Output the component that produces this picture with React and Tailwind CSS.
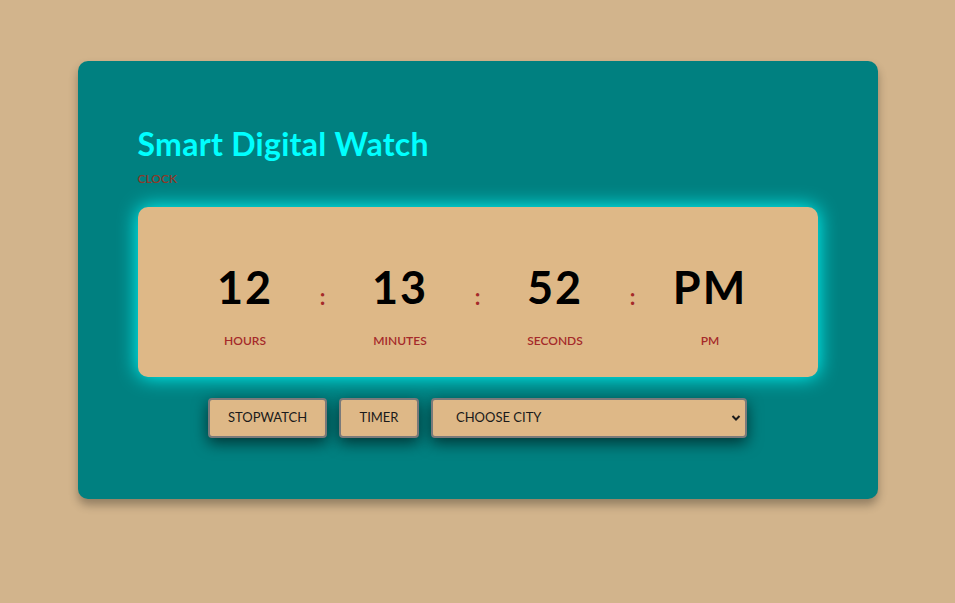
import { useState } from "react";

const font = { fontFamily: '"Lato", "DejaVu Sans", sans-serif' };

function Unit({ value, label }) {
  return (
    <div className="flex w-[110px] flex-col items-center">
      <span className="text-[45px] font-bold leading-[56px] tracking-[2px] text-black">{value}</span>
      <span className="mt-[18px] text-[12px] font-semibold leading-[16px] text-[#a52a2a]">{label}</span>
    </div>
  );
}

function Colon() {
  return (
    <div className="flex w-[45px] justify-center pt-[24px]">
      <span className="text-[22px] font-bold leading-[28px] text-[#a52a2a]">:</span>
    </div>
  );
}

export default function App() {
  const [time] = useState({ h: "12", m: "13", s: "52", ampm: "PM" });

  return (
    <div className="min-h-[603px] w-full bg-[#d2b48c] pt-[61px]" style={font}>
      <div className="mx-auto w-[800px] rounded-[10px] bg-[#008080] px-[60px] pb-[61px] pt-[64px] shadow-[0_6px_10px_rgba(0,0,0,0.3)]">
        <h1 className="text-[32px] font-bold leading-[38px] tracking-[0.3px] text-[#00ffff]">Smart Digital Watch</h1>
        <p className="mt-[9px] text-[12px] font-semibold leading-[14px] text-[#8b3a2a]">CLOCK</p>

        <div className="mt-[21px] flex h-[170px] items-start justify-center rounded-[10px] bg-[#deb887] pt-[52px] shadow-[0_0_20px_#00ffff]">
          <Unit value={time.h} label="HOURS" />
          <Colon />
          <Unit value={time.m} label="MINUTES" />
          <Colon />
          <Unit value={time.s} label="SECONDS" />
          <Colon />
          <Unit value={time.ampm} label="PM" />
        </div>

        <div className="mt-[21px] flex justify-center gap-[12px]">
          <button className="h-[40px] w-[119px] rounded-[4px] border-2 border-[#7a7a7a] bg-[#deb887] text-[13px] text-[#1a1a1a] shadow-[0_5px_15px_rgba(0,0,0,0.6)]">
            STOPWATCH
          </button>
          <button className="h-[40px] w-[80px] rounded-[4px] border-2 border-[#7a7a7a] bg-[#deb887] text-[13px] text-[#1a1a1a] shadow-[0_5px_15px_rgba(0,0,0,0.6)]">
            TIMER
          </button>
          <div className="relative flex h-[40px] w-[316px] items-center rounded-[4px] border-2 border-[#7a7a7a] bg-[#deb887] pl-[23px] text-[13px] text-[#1a1a1a] shadow-[0_5px_15px_rgba(0,0,0,0.6)]">
            <span>CHOOSE CITY</span>
            <svg className="absolute right-[4px] top-[14px]" width="10" height="8" viewBox="0 0 10 8">
              <path d="M1.5 2 L5 5.5 L8.5 2" fill="none" stroke="#1a1a1a" strokeWidth="2" />
            </svg>
          </div>
        </div>
      </div>
    </div>
  );
}
